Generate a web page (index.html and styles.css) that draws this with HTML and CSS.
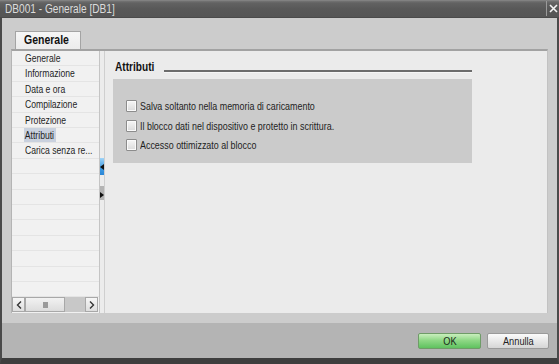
FILE: index.html
```html
<!DOCTYPE html>
<html>
<head>
<meta charset="utf-8">
<link rel="stylesheet" href="styles.css">
</head>
<body>
<div class="window">
  <div class="titlebar">
    <span class="title"><span class="cn">DB001 - Generale [DB1]</span></span>
    <span class="close"><svg width="9" height="9" viewBox="0 0 9 9"><path d="M1 1L8 8M8 1L1 8" stroke="#f4f4f4" stroke-width="1.6"/></svg></span>
  </div>
  <div class="content">
    <div class="tabs"><div class="tab"><span class="cn">Generale</span></div></div>
    <div class="panel">
      <div class="nav">
        <ul class="navlist">
          <li><span class="cn">Generale</span></li>
          <li><span class="cn">Informazione</span></li>
          <li><span class="cn">Data e ora</span></li>
          <li><span class="cn">Compilazione</span></li>
          <li><span class="cn">Protezione</span></li>
          <li><span class="cn sel">Attributi</span></li>
          <li><span class="cn">Carica senza re...</span></li>
        </ul>
        <div class="hscroll">
          <span class="sbtn"><svg width="6" height="8" viewBox="0 0 6 8"><path d="M5 0.5L1.5 4L5 7.5" fill="none" stroke="#333" stroke-width="1.4"/></svg></span>
          <span class="thumb"><span class="grip"></span></span>
          <span class="track"></span>
          <span class="sbtn"><svg width="6" height="8" viewBox="0 0 6 8"><path d="M1 0.5L4.5 4L1 7.5" fill="none" stroke="#333" stroke-width="1.4"/></svg></span>
        </div>
      </div>
      <div class="splitter">
        <div class="sp-blue"><svg width="4" height="6" viewBox="0 0 4 6"><path d="M0 3L4 0V6Z" fill="#111"/></svg></div>
        <div class="sp-gray"><svg width="4" height="6" viewBox="0 0 4 6"><path d="M4 3L0 0V6Z" fill="#111"/></svg></div>
      </div>
      <div class="main">
        <div class="heading"><span class="htext cn">Attributi</span><span class="rule"></span></div>
        <div class="box">
          <label class="opt"><span class="cb"></span><span class="cn">Salva soltanto nella memoria di caricamento</span></label>
          <label class="opt"><span class="cb"></span><span class="cn">Il blocco dati nel dispositivo e protetto in scrittura.</span></label>
          <label class="opt"><span class="cb"></span><span class="cn">Accesso ottimizzato al blocco</span></label>
        </div>
      </div>
    </div>
  </div>
  <div class="footer">
    <button class="btn ok"><span class="cn mid">OK</span></button>
    <button class="btn"><span class="cn mid">Annulla</span></button>
  </div>
</div>
</body>
</html>
```

FILE: styles.css
```css
* { box-sizing: border-box; }
html, body { margin: 0; padding: 0; }
body {
  width: 559px;
  height: 364px;
  overflow: hidden;
  background: #3e3e3e;
  font-family: "Liberation Sans", Arial, sans-serif;
  font-size: 11px;
  color: #1e1e1e;
}
.cn {
  display: inline-block;
  transform: scaleX(0.81);
  transform-origin: left center;
  white-space: nowrap;
}
.cn.mid { transform-origin: center center; }
.window {
  width: 559px;
  height: 364px;
  display: flex;
  flex-direction: column;
  border-left: 2px solid #4a4a4a;
  border-right: 2px solid #4a4a4a;
  border-bottom: 6px solid #3e3e3e;
}
.titlebar {
  height: 18px;
  margin: 0 -2px;
  display: flex;
  align-items: center;
  justify-content: space-between;
  background: linear-gradient(to bottom, #8e8e8e 0, #747474 1px, #626262 3px, #585858 9px, #555555 100%);
  border-bottom: 1px solid #4a4a4a;
}
.title {
  color: #dcdcdc;
  font-size: 12.5px;
  padding-left: 5px;
  padding-top: 1px;
}
.close {
  width: 13px;
  height: 15px;
  display: flex;
  align-items: center;
  justify-content: center;
  border-left: 1px solid #9a9a9a;
}
.content {
  height: 305px;
  background: #cccccc;
  padding: 13px 9px 10px 9px;
  display: flex;
  flex-direction: column;
}
.tabs { display: flex; height: 18px; }
.tab {
  margin-left: 4px;
  width: 66px;
  height: 18px;
  background: linear-gradient(to bottom, #f6f6f6, #ececec);
  border: 1px solid #a4a4a4;
  border-bottom: none;
  font-weight: bold;
  font-size: 12.5px;
  padding-left: 8px;
  line-height: 17px;
  color: #111;
}
.tab .cn { transform: scaleX(0.84); }
.panel {
  height: 264px;
  display: flex;
  background: #ebebeb;
  border-top: 2px solid #a2a2a2;
  border-left: 1px solid #b4b4b4;
  border-right: 1px solid #c2c2c2;
}
.nav {
  width: 87px;
  display: flex;
  flex-direction: column;
  background: #f1f1f1;
}
.navlist {
  list-style: none;
  margin: 0;
  padding: 0;
  flex: 1;
  background: repeating-linear-gradient(to bottom, transparent 0, transparent 14.4px, #e4e4e4 14.4px, #e4e4e4 15.4px);
}
.navlist li {
  height: 15.4px;
  line-height: 15px;
  padding-left: 13px;
  white-space: nowrap;
  font-size: 10.5px;
}
.navlist .cn { transform: scaleX(0.82); }
.sel {
  background: #c9d1de;
  padding: 0 2px 0 1px;
  margin-left: -1px;
  line-height: 14px;
}
.hscroll {
  height: 15px;
  display: flex;
  margin: 0 1px 1px 0;
  background: #c8c8c8;
}
.sbtn {
  width: 13px;
  height: 15px;
  border: 1px solid #a8a8a8;
  background: linear-gradient(to bottom, #f6f6f6, #dedede);
  display: flex;
  align-items: center;
  justify-content: center;
}
.thumb {
  width: 40px;
  height: 15px;
  border: 1px solid #a8a8a8;
  background: linear-gradient(to bottom, #f2f2f2, #dcdcdc);
  display: flex;
  align-items: center;
  justify-content: center;
}
.grip { width: 5px; height: 6px; background: #9a9a9a; }
.track { flex: 1; }
.splitter {
  width: 6px;
  background: #ececec;
  border-left: 1px solid #c4c4c4;
  border-right: 1px solid #cfcfcf;
  display: flex;
  flex-direction: column;
}
.sp-blue {
  margin-top: 107px;
  height: 17px;
  background: linear-gradient(to bottom, #9fd4f8, #3f9ae2 60%, #2a86d6);
  display: flex;
  align-items: center;
}
.sp-gray {
  margin-top: 11px;
  height: 14px;
  background: #b4b4b4;
  display: flex;
  align-items: flex-end;
  padding-bottom: 2px;
}
.main {
  flex: 1;
  padding: 9px 0 0 8px;
}
.heading {
  display: flex;
  height: 14px;
  width: 359px;
  margin-bottom: 5px;
}
.htext {
  font-weight: bold;
  font-size: 12.5px;
  margin-left: 2px;
  line-height: 14px;
  color: #111;
}
.rule {
  width: 311px;
  margin-left: auto;
  margin-top: 10px;
  height: 3px;
  background: #6c6c6c;
  border-bottom: 1px solid #f6f6f6;
}
.box {
  width: 359px;
  height: 84px;
  background: #cbcbcb;
  padding: 21px 0 0 13px;
  display: flex;
  flex-direction: column;
  gap: 7.5px;
}
.opt {
  display: flex;
  align-items: center;
  height: 12px;
  font-size: 11px;
  gap: 3px;
  white-space: nowrap;
}
.cb {
  width: 11px;
  height: 12px;
  flex: none;
  border: 1px solid #8c8c8c;
  border-radius: 1px;
  background: linear-gradient(to bottom, #f6f6f6, #dadada);
  box-shadow: inset 0 0 0 1px #fafafa;
}
.footer {
  height: 35px;
  background: #b4b4b4;
  display: flex;
  justify-content: flex-end;
  align-items: center;
  gap: 6px;
  padding-right: 8px;
}
.btn {
  height: 16px;
  width: 62px;
  padding: 0;
  font-family: inherit;
  font-size: 11px;
  color: #222;
  border: 1px solid #9a9a9a;
  border-radius: 2px;
  background: linear-gradient(to bottom, #fbfbfb, #e8e8e8 50%, #d6d6d6);
}
.btn .cn { transform: scaleX(0.84); }
.btn.ok {
  width: 63px;
  border-color: #6f9c68;
  background: linear-gradient(to bottom, #c9efbd, #8fd886 45%, #5fc25f);
  color: #1a2a1a;
}
```
